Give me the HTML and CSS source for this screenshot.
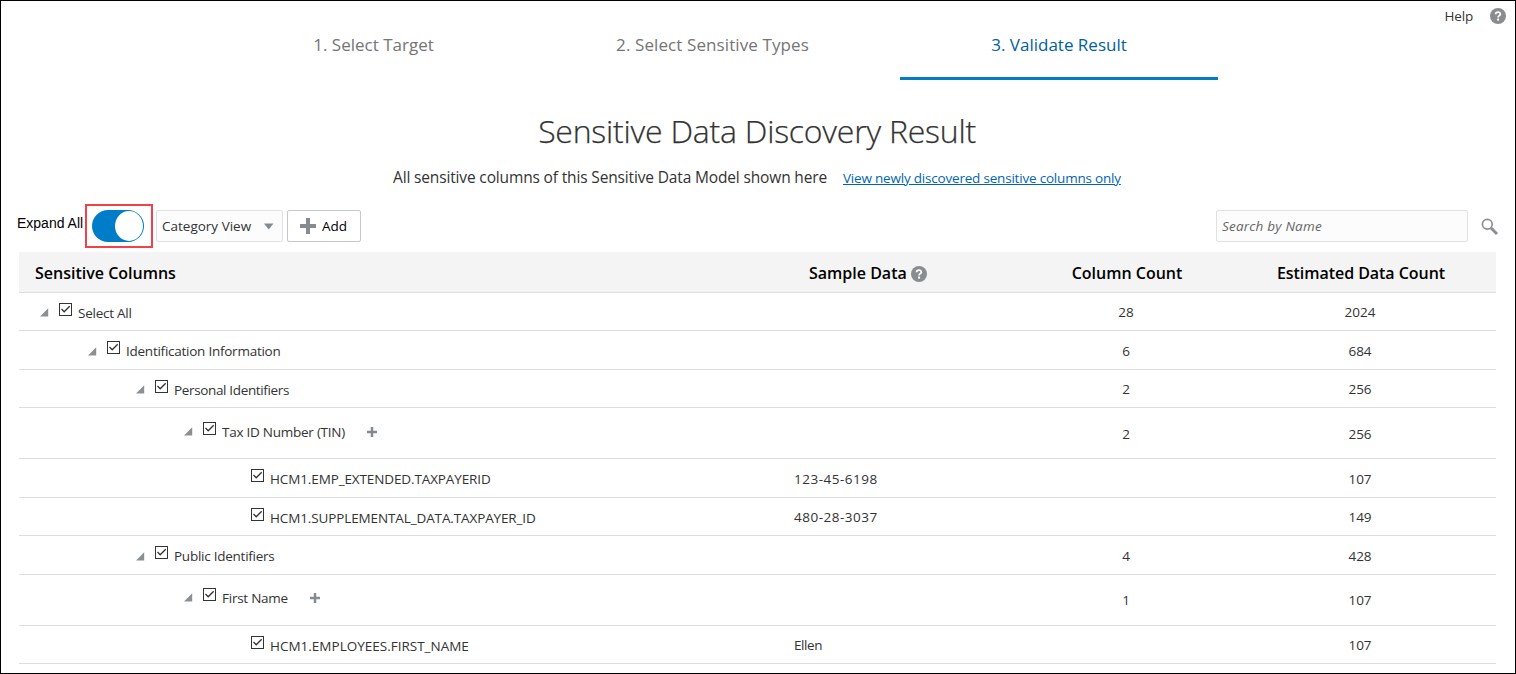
FILE: index.html
```
<!DOCTYPE html>
<html lang="en">
<head>
<meta charset="utf-8">
<title>Sensitive Data Discovery Result</title>
<link rel="stylesheet" href="styles.css">
</head>
<body>
<svg width="0" height="0" class="defs">
  <symbol id="tri" viewBox="0 0 9 9"><path d="M8.2 0.3V8.5H0Z" fill="#8b8f92"/></symbol>
  <symbol id="box" viewBox="0 0 13 13"><rect x=".5" y=".5" width="12" height="12" fill="#fff" stroke="#333"/><path d="M2.5 6L5.2 8.8L10.7 3.3" fill="none" stroke="#333" stroke-width="1.3"/></symbol>
  <symbol id="plus" viewBox="0 0 16 16"><path d="M6 0h4v6h6v4h-6v6H6v-6H0V6h6z" fill="#858b8f"/></symbol>
  <symbol id="help" viewBox="0 0 16 16"><circle cx="8" cy="8" r="8" fill="#898d90"/><path d="M5.6 6.2C5.7 3.4 10.4 3.5 10.3 6.1C10.2 7.7 8.1 7.6 8.1 9.5" fill="none" stroke="#fff" stroke-width="1.8"/><rect x="7.1" y="10.6" width="2" height="2" fill="#fff"/></symbol>
</svg>
<div class="page">
  <header class="top">
    <nav class="steps">
      <div class="step s1"><span>1. Select Target</span></div>
      <div class="step s2"><span>2. Select Sensitive Types</span></div>
      <div class="step s3 active"><span>3. Validate Result</span></div>
    </nav>
    <div class="help"><span>Help</span><svg width="16" height="16"><use href="#help"/></svg></div>
  </header>
  <h1 class="title"><span>Sensitive Data Discovery Result</span></h1>
  <p class="sub"><span class="desc">All sensitive columns of this Sensitive Data Model shown here</span><a class="link" href="#">View newly discovered sensitive columns only</a></p>
  <div class="toolbar">
    <span class="expand">Expand All</span>
    <div class="mark"><div class="toggle"><div class="knob"></div></div></div>
    <div class="select"><span>Category View</span><svg width="10" height="7"><path d="M0 0.5H9.5L4.75 6.5Z" fill="#858b8f"/></svg></div>
    <button class="add"><svg width="16" height="16"><use href="#plus"/></svg><span>Add</span></button>
    <div class="search"><span>Search by Name</span></div>
    <svg class="lens" width="18" height="18" viewBox="0 0 18 18"><circle cx="6.3" cy="6.3" r="4.9" fill="none" stroke="#8b8f92" stroke-width="1.7"/><path d="M10 10L16 16" stroke="#8b8f92" stroke-width="3"/></svg>
  </div>
  <div class="table">
    <div class="row head"><div class="h1c">Sensitive Columns</div><div class="h2c"><span>Sample Data</span><svg width="16" height="16"><use href="#help"/></svg></div><div class="h3c num">Column Count</div><div class="h4c num">Estimated Data Count</div></div>
    <div class="row r38"><div class="name l0"><svg class="tri"><use href="#tri"/></svg><svg class="box"><use href="#box"/></svg><span class="label">Select All</span></div><div class="sample"></div><div class="num">28</div><div class="num">2024</div></div>
    <div class="row r39"><div class="name l1"><svg class="tri"><use href="#tri"/></svg><svg class="box"><use href="#box"/></svg><span class="label">Identification Information</span></div><div class="sample"></div><div class="num">6</div><div class="num">684</div></div>
    <div class="row r38"><div class="name l2"><svg class="tri"><use href="#tri"/></svg><svg class="box"><use href="#box"/></svg><span class="label tight">Personal Identifiers</span></div><div class="sample"></div><div class="num">2</div><div class="num">256</div></div>
    <div class="row r51"><div class="name l3"><svg class="tri"><use href="#tri"/></svg><svg class="box"><use href="#box"/></svg><span class="label">Tax ID Number (TIN)</span><svg class="plus"><use href="#plus"/></svg></div><div class="sample"></div><div class="num">2</div><div class="num">256</div></div>
    <div class="row r39"><div class="name l4"><svg class="box"><use href="#box"/></svg><span class="label column">HCM1.EMP_EXTENDED.TAXPAYERID</span></div><div class="sample digits">123-45-6198</div><div class="num"></div><div class="num">107</div></div>
    <div class="row r38"><div class="name l4"><svg class="box"><use href="#box"/></svg><span class="label column">HCM1.SUPPLEMENTAL_DATA.TAXPAYER_ID</span></div><div class="sample digits">480-28-3037</div><div class="num"></div><div class="num">149</div></div>
    <div class="row r39"><div class="name l2"><svg class="tri"><use href="#tri"/></svg><svg class="box"><use href="#box"/></svg><span class="label">Public Identifiers</span></div><div class="sample"></div><div class="num">4</div><div class="num">428</div></div>
    <div class="row r51 raised"><div class="name l3"><svg class="tri"><use href="#tri"/></svg><svg class="box"><use href="#box"/></svg><span class="label">First Name</span><svg class="plus"><use href="#plus"/></svg></div><div class="sample"></div><div class="num">1</div><div class="num">107</div></div>
    <div class="row r38"><div class="name l4"><svg class="box"><use href="#box"/></svg><span class="label column wide">HCM1.EMPLOYEES.FIRST_NAME</span></div><div class="sample word">Ellen</div><div class="num"></div><div class="num">107</div></div>
  </div>
</div>
</body>
</html>
```
FILE: styles.css
```
* { box-sizing: border-box; }
body { margin: 0; background: #fff; }
svg { display: block; flex: none; }
.defs { position: absolute; }
.page { width: 1516px; height: 674px; border: 1px solid #000; overflow: hidden; font-family: "Open Sans", "Noto Sans", sans-serif; font-size: 13.5px; color: #333; white-space: nowrap; }
.top { display: flex; height: 79px; padding-left: 213px; }
.steps { display: flex; width: 1004px; }
.step { height: 79px; line-height: 24px; padding-top: 32px; display: flex; justify-content: center; font-size: 17px; color: #757575; border-bottom: 3px solid transparent; }
.s1 { width: 319px; }
.s2 { width: 359px; letter-spacing: 0.1px; }
.s3 { width: 318px; margin-left: auto; }
.active { color: #00619e; border-color: #007dc5; }
.help { flex: 1; display: flex; justify-content: flex-end; gap: 17px; padding: 7px 9px 0 0; height: 24px; line-height: 17px; letter-spacing: -0.2px; }
.title { margin: 29px 0 0; height: 44px; line-height: 44px; font-size: 32px; font-weight: 300; text-align: center; letter-spacing: -0.23px; padding-right: 2px; -webkit-text-stroke: 0.25px #333; }
.sub { margin: 12px 0 0 392px; height: 24px; line-height: 24px; display: flex; gap: 16px; }
.desc { width: 434px; font-size: 15.5px; letter-spacing: -0.15px; }
.link { font-size: 13.5px; line-height: 26px; color: #0066b3; text-decoration: underline; letter-spacing: -0.2px; }
.toolbar { display: flex; align-items: flex-start; padding-left: 16px; height: 63px; padding-top: 15px; }
.expand { font-family: "Liberation Sans", Arial, sans-serif; color: #000; font-size: 14px; line-height: 16px; width: 68px; margin-top: 11px; }
.mark { width: 68px; height: 44px; border: 2px solid #f04248; padding: 4px 5px; }
.toggle { width: 52px; height: 32px; border-radius: 16px; background: #007dc8; padding: 1px; display: flex; justify-content: flex-end; }
.knob { width: 28px; height: 30px; border-radius: 50%; background: #fff; }
.select { width: 127px; height: 32px; margin: 6px 0 0 3px; border: 1px solid #dfe1e2; border-radius: 2px; background: #fcfcfc; display: flex; align-items: center; justify-content: space-between; padding: 0 8px 0 5px; }
.add { width: 74px; height: 32px; margin: 6px 0 0 4px; border: 1px solid #c4c8cb; border-radius: 2px; background: #fff; display: flex; align-items: center; gap: 6px; padding: 0 0 0 12px; font: 13.5px "Open Sans", sans-serif; color: #000; }
.search { width: 252px; height: 32px; margin: 6px 0 0 auto; border: 1px solid #dfe1e2; border-radius: 2px; background: #fcfcfc; padding-left: 5px; line-height: 30px; font-style: italic; color: #666; letter-spacing: 0.2px; }
.lens { margin: 14px 16px 0 13px; }
.table { margin-left: 18px; width: 1477px; }
.row { display: grid; grid-template-columns: 775px 215px 234px 234px; align-items: center; border-bottom: 1px solid #ddd; }
.head { height: 41px; padding-top: 1px; background: #f4f4f4; font-size: 16px; font-weight: 600; color: #000; }
.h1c { padding-left: 16px; }
.h2c { display: flex; align-items: center; gap: 4px; padding-left: 15px; }
.h2c svg { margin-top: 2px; }
.h3c, .h4c { padding-left: 2px; }
.h4c { letter-spacing: -0.05px; }
.num { text-align: center; }
.r38 { height: 38px; }
.r39 { height: 39px; }
.r51 { height: 51px; }
.r39 .num, .r39 .sample, .r51 .num { padding-top: 1px; }
.name { display: flex; align-items: center; }
.r51 .name { padding-bottom: 5px; }
.raised .name { padding-bottom: 7px; }
.raised .num { padding-top: 0; padding-bottom: 1px; }
.l0 { padding-left: 21px; }
.l1 { padding-left: 69px; }
.l2 { padding-left: 117px; }
.l3 { padding-left: 165px; }
.l4 { padding-left: 232px; }
.tri { width: 9px; height: 9px; margin: 2px 10px 0 0; }
.box { width: 13px; height: 13px; margin: 0 6px 5px 0; }
.label { padding-top: 2px; letter-spacing: -0.25px; }
.tight { letter-spacing: -0.35px; }
.column { letter-spacing: -0.12px; }
.wide { letter-spacing: 0; }
.digits { letter-spacing: 0.5px; }
.word { letter-spacing: -0.4px; }
.plus { width: 10px; height: 10px; margin: 2px 0 0 22px; }
```
